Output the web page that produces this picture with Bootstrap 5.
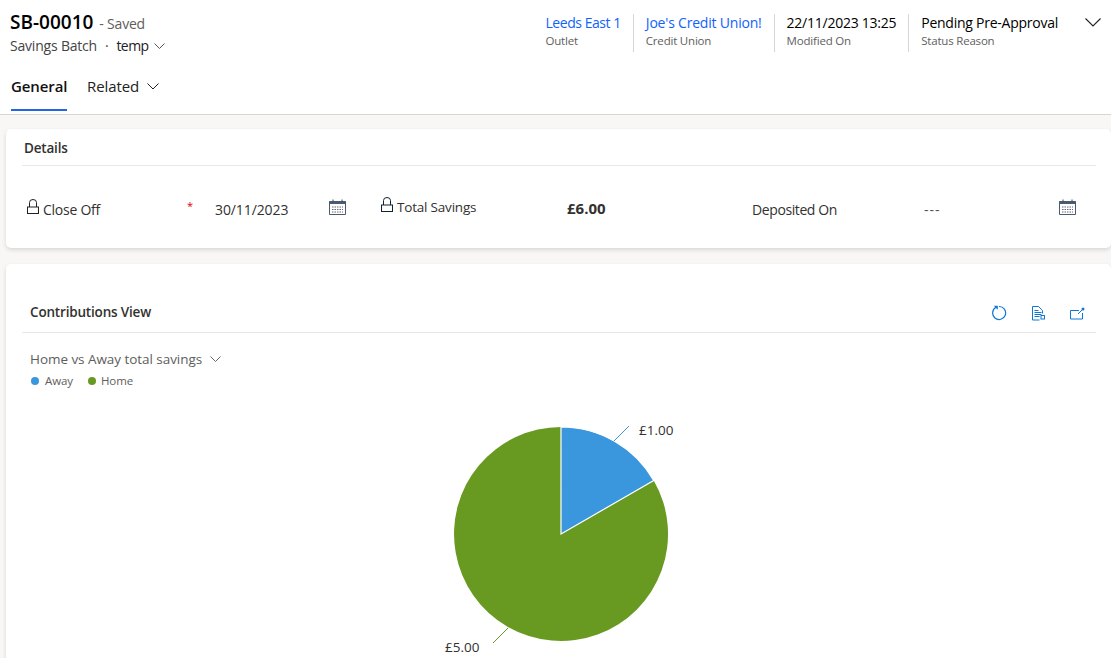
<!DOCTYPE html>
<html lang="en">
<head>
  <meta charset="UTF-8">
  <title>SB-00010 - Saved</title>
  <link rel="stylesheet" href="https://cdn.jsdelivr.net/npm/bootstrap@5.3.0/dist/css/bootstrap.min.css">
  <style>
    html, body { height: 658px; overflow: hidden; }
    body { background: #f8f7f5; font-family: "Open Sans", "Noto Sans", sans-serif; color: #323130; font-size: 14px; }
    .rec-head { background: #fff; height: 115px; border-bottom: 1px solid #d8d6d4; padding: 10px 10px 0 10px; }
    .rec-title { font-size: 19px; line-height: 24px; font-weight: 600; color: #000; }
    .rec-saved { font-size: 14px; color: #605e5c; margin-left: 1px; letter-spacing: -.2px; }
    .rec-sub { font-size: 14px; line-height: 20px; color: #444; letter-spacing: -.2px; }
    .mid-dot { margin: 0 8px; }
    .rec-sub b { font-weight: 400; color: #222; margin-right: 6px; letter-spacing: -.6px; }
    .facts { margin-right: 7px; margin-top: 4px; }
    .fact { border-left: 1px solid #d8d6d4; padding: 0 12px; height: 38px; line-height: 18px; white-space: nowrap; }
    .fact:first-child { border-left: 0; }
    .fact-val { font-size: 14px; color: #000; letter-spacing: -.2px; }
    .fact-val.lnk { color: #0f62fe; }
    .fact:first-child .fact-val { letter-spacing: -.45px; }
    .fact-val.strong { font-weight: 500; letter-spacing: -.25px; }
    .fact-cap { font-size: 11.5px; color: #605e5c; letter-spacing: -.2px; }
    .tabs { height: 40px; margin: 15px 0 0 1px; }
    .tab-item { font-size: 15px; line-height: 22px; padding: 4px 0 0; height: 40px; color: #222; letter-spacing: -.1px; }
    .tab-item.on { font-weight: 600; border-bottom: 2px solid #2266e3; margin-right: 20px; width: 56px; color: #111; }
    .tab-arrow { margin: 0 0 3px 4px; }
    .sheet { background: #fff; margin-left: 6px; border-radius: 5px; box-shadow: 0 2px 4px rgba(0,0,0,.13); }
    .sheet-a { margin-top: 14px; height: 119px; padding: 7px 15px 0 16px; }
    .sheet-b { margin-top: 16px; height: 400px; padding: 0 15px 0 16px; }
    .sheet-hd { font-size: 13.5px; font-weight: 600; color: #323130; line-height: 24px; letter-spacing: -.18px; }
    .sheet-a .sheet-hd { height: 30px; padding-left: 2px; border-bottom: 1px solid #e8e8e8; }
    .sheet-b .sheet-hd { height: 69px; padding: 36px 0 0 8px; border-bottom: 1px solid #e8e8e8; }
    .tools { gap: 24px; padding-right: 11px; margin-top: -6px; }
    .fields { display: grid; grid-template-columns: 359px 371px 344px; margin-top: 30px; }
    .fld { display: flex; align-items: center; height: 26px; letter-spacing: -.25px; }
    .fld-lbl { display: flex; align-items: center; gap: 4px; }
    .lbl-a { width: 165px; padding-left: 5px; }
    .lbl-b { width: 186px; margin-top: -4px; font-size: 13.5px; letter-spacing: -.2px; }
    .lbl-c { width: 172px; letter-spacing: -.4px; }
    .lbl-b svg { margin-top: -6px; }
    .lbl-a svg { margin-top: -5px; }
    .req { width: 28px; color: #d00; font-size: 11px; margin-top: -5px; }
    .val-a { width: 114px; letter-spacing: -.1px; }
    .val-b { font-weight: 700; font-size: 15px; margin-top: -1px; letter-spacing: 0; }
    .val-c { width: 135px; color: #555; letter-spacing: 1px; }
    .cal-ico { margin-top: -4px; }
    .chart-box { position: relative; padding-top: 16px; }
    .chart-pick { font-size: 13.5px; color: #605e5c; margin-left: 8px; line-height: 20px; letter-spacing: -.05px; }
    .pick-arrow { margin: 0 0 2px 4px; }
    .legend { font-size: 11.5px; color: #605e5c; margin: 2px 0 0 9px; line-height: 20px; gap: 15px; letter-spacing: -.1px; }
    .dot { display: inline-block; width: 8px; height: 8px; border-radius: 50%; margin-right: 6px; }
    .dot-away { background: #3a96dd; }
    .dot-home { background: #689920; margin-right: 5px; }
    .pie { position: absolute; left: 0; top: 0; }
    .pie text { font-family: "Open Sans", "Noto Sans", sans-serif; font-size: 13.5px; fill: #323130; }
  </style>
</head>
<body>
<div class="rec-head">
  <div class="d-flex justify-content-between">
    <div>
      <div class="rec-title">SB-00010 <span class="rec-saved fw-normal">- Saved</span></div>
      <div class="rec-sub d-flex align-items-center">
        <span>Savings Batch</span><span class="mid-dot">·</span><b>temp</b>
        <svg width="11" height="6" viewBox="0 0 11 6"><path d="M.5.5 5.500 5.500 10.500.5" fill="none" stroke="#555"/></svg>
      </div>
    </div>
    <div class="d-flex align-items-start">
      <div class="d-flex facts">
        <div class="fact"><div class="fact-val lnk">Leeds East 1</div><div class="fact-cap">Outlet</div></div>
        <div class="fact"><div class="fact-val lnk">Joe's Credit Union!</div><div class="fact-cap">Credit Union</div></div>
        <div class="fact"><div class="fact-val strong">22/11/2023 13:25</div><div class="fact-cap">Modified On</div></div>
        <div class="fact"><div class="fact-val strong">Pending Pre-Approval</div><div class="fact-cap">Status Reason</div></div>
      </div>
      <svg class="mt-2 ms-2" width="16" height="9" viewBox="0 0 16 9"><path d="M.5.5 8 8 15.500.5" fill="none" stroke="#222" stroke-width="1.100"/></svg>
    </div>
  </div>
  <div class="d-flex tabs">
    <div class="tab-item on">General</div>
    <div class="tab-item">Related
      <svg class="tab-arrow" width="12" height="7" viewBox="0 0 12 7"><path d="M.5.5 6 6 11.500.5" fill="none" stroke="#222"/></svg>
    </div>
  </div>
</div>

<div class="sheet sheet-a">
  <div class="sheet-hd">Details</div>
  <div class="fields">
    <div class="fld">
      <div class="fld-lbl lbl-a">
        <svg width="12" height="15" viewBox="0 0 12 15"><rect x=".5" y="8" width="11" height="6.500" fill="#fff" stroke="#222"/><path d="M2.500 8V3.500a3.500 3 0 0 1 7 0V8" fill="none" stroke="#222"/></svg>
        Close Off
      </div>
      <div class="req">*</div>
      <div class="val-a">30/11/2023</div>
      <svg class="cal-ico" width="17" height="16" viewBox="0 0 17 16"><path d="M.5 2.500h16v13H.5z" fill="none" stroke="#4a5a70"/><path d="M.5 3.500h16" stroke="#4a5a70" stroke-width="3"/><path d="M4 .5v2M13 .5v2" stroke="#444"/><path d="M3 8h11M3 10.500h11M3 13h11" stroke="#667" stroke-dasharray="1.500 1"/></svg>
    </div>
    <div class="fld">
      <div class="fld-lbl lbl-b">
        <svg width="12" height="15" viewBox="0 0 12 15"><rect x=".5" y="8" width="11" height="6.500" fill="#fff" stroke="#123"/><path d="M2.500 8V3.500a3.500 3 0 0 1 7 0V8" fill="none" stroke="#123"/></svg>
        Total Savings
      </div>
      <div class="val-b">£6.00</div>
    </div>
    <div class="fld">
      <div class="lbl-c">Deposited On</div>
      <div class="val-c">---</div>
      <svg class="cal-ico" width="17" height="16" viewBox="0 0 17 16"><path d="M.5 2.500h16v13H.5z" fill="none" stroke="#4a5a70"/><path d="M.5 3.500h16" stroke="#4a5a70" stroke-width="3"/><path d="M4 .5v2M13 .5v2" stroke="#444"/><path d="M3 8h11M3 10.500h11M3 13h11" stroke="#667" stroke-dasharray="1.500 1"/></svg>
    </div>
  </div>
</div>

<div class="sheet sheet-b">
  <div class="sheet-hd d-flex justify-content-between">
    <span>Contributions View</span>
    <div class="d-flex align-items-center tools">
      <svg width="16" height="16" viewBox="0 0 16 16"><path d="M5 2.300A6.500 6.500 0 1 0 8 1.500" fill="none" stroke="#0f78d4" stroke-width="1.200"/><path d="M2.800 .8h4v4z" fill="#0f78d4"/></svg>
      <svg width="15" height="15" viewBox="0 0 15 15"><path d="M1.500.5h6l4 4v3M1.500.5v13.500h7" fill="none" stroke="#0f78d4"/><path d="M3.500 4.500h4M3.500 6.500h7M3.500 8.500h7M3.500 10.500h5" stroke="#0f78d4"/><rect x="10" y="9.500" width="3.500" height="3.500" fill="none" stroke="#0f78d4"/></svg>
      <svg width="15" height="13" viewBox="0 0 15 13"><path d="M9 3.500H.5v8.500h12V6" fill="none" stroke="#0f78d4"/><path d="M8 7 12 3" stroke="#0f78d4"/><circle cx="13" cy="2" r="1.500" fill="#0f78d4"/></svg>
    </div>
  </div>
  <div class="chart-box">
    <div class="chart-pick">Home vs Away total savings
      <svg class="pick-arrow" width="11" height="6" viewBox="0 0 11 6"><path d="M.5.5 5.500 5.500 10.500.5" fill="none" stroke="#666"/></svg>
    </div>
    <div class="d-flex legend">
      <span><i class="dot dot-away"></i>Away</span>
      <span><i class="dot dot-home"></i>Home</span>
    </div>
    <!-- viewBox in page coords, pie centre 561,534 -->
    <svg class="pie" width="1090" height="325" viewBox="22 333 1090 325">
      <path d="M561 534L653.700 480.500A107 107 0 1 1 561 427z" fill="#689920"/>
      <path d="M561 534V427A107 107 0 0 1 653.700 480.500z" fill="#3a96dd" stroke="#fff" stroke-width="1.200"/>
      <path d="M614 441 629 426" stroke="#3a96dd" fill="none"/>
      <path d="M508 628 493 643" stroke="#689920" fill="none"/>
      <text x="639" y="435">£1.00</text>
      <text x="445" y="652">£5.00</text>
    </svg>
  </div>
</div>
<script src="https://cdn.jsdelivr.net/npm/bootstrap@5.3.0/dist/js/bootstrap.bundle.min.js"></script>
</body>
</html>
